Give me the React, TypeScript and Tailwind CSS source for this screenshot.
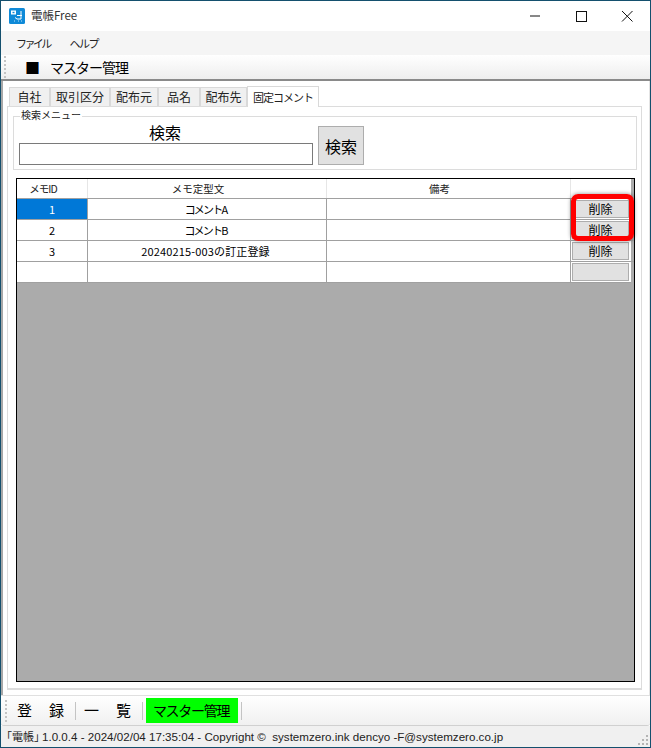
const jp = "font-['Noto_Sans_CJK_JP','Liberation_Sans',sans-serif]"

const tabs = [
  { label: "自社", width: "w-[41px]" },
  { label: "取引区分", width: "w-[60px]" },
  { label: "配布元", width: "w-[48px]" },
  { label: "品名", width: "w-[42px]" },
  { label: "配布先", width: "w-[47px]" },
]

const rows = [
  { id: "1", memo: "コメントA", selected: true, label: "削除", tight: true },
  { id: "2", memo: "コメントB", selected: false, label: "削除", tight: true },
  { id: "3", memo: "20240215-003の訂正登録", selected: false, label: "削除", tight: false },
  { id: "", memo: "", selected: false, label: "", tight: false },
]

function Grip() {
  return (
    <div className="flex w-[2px] flex-col gap-[2px] shrink-0">
      {[0, 1, 2, 3, 4, 5].map((i) => (
        <div key={i} className="h-[2px] w-[2px] bg-[#c4c4c4]" />
      ))}
    </div>
  )
}

function AppIcon() {
  return (
    <svg width="16" height="16" viewBox="0 0 16 16" className="shrink-0">
      <rect width="16" height="16" rx="1.5" fill="#0f8ad8" />
      <rect x="2" y="2.5" width="5" height="4" fill="#fff" />
      <rect x="3.5" y="3.8" width="2" height="1.4" fill="#0f8ad8" />
      <path d="M8 7.5h5M12 3v8H8M6 9.5l2 1.5" stroke="#fff" strokeWidth="1" fill="none" />
      <path d="M9 13h1M12 13h1M5 13h1" stroke="#bfe3fa" strokeWidth="1" />
    </svg>
  )
}

export default function App() {
  return (
    <div className={`${jp} relative flex h-[748px] w-[651px] flex-col overflow-hidden border border-[#14506e] bg-white text-black`}>
      {/* title bar */}
      <div className="flex h-[30px] shrink-0 items-center bg-white pl-[8px]">
        <AppIcon />
        <span className="ml-[6px] text-[11.5px] text-[#333]">電帳Free</span>
        <div className="ml-auto flex items-center">
          <svg width="46" height="30" viewBox="0 0 46 30">
            <path d="M18 15h10" stroke="#111" strokeWidth="1" />
          </svg>
          <svg width="46" height="30" viewBox="0 0 46 30">
            <rect x="18.5" y="10.5" width="10" height="10" stroke="#111" strokeWidth="1" fill="none" />
          </svg>
          <svg width="46" height="30" viewBox="0 0 46 30">
            <path d="M18 10l10.5 10.5M28.5 10L18 20.5" stroke="#111" strokeWidth="1" fill="none" />
          </svg>
        </div>
      </div>

      {/* menu */}
      <div className="flex h-[24px] shrink-0 items-center bg-[#f5f5f5] pl-[15px] text-[11px] tracking-[-2.6px] text-[#222]">
        <span>ファイル</span>
        <span className="ml-[20px] tracking-[-1.5px]">ヘルプ</span>
      </div>

      {/* top toolbar */}
      <div className="flex h-[26px] shrink-0 items-center border-b-2 border-[#8a8a8a] bg-gradient-to-b from-white to-[#eeeeee] pl-[3px]">
        <Grip />
        <span className="ml-[19px] text-[15px] leading-none">■</span>
        <span className="ml-[10px] text-[14px] tracking-[-1px]">マスター管理</span>
      </div>

      {/* content */}
      <div className="flex min-h-0 flex-1 flex-col border-l-2 border-r border-l-[#a8a8a8] border-r-[#e4e4e4] pl-[4px] pr-[7px] pb-[5px]">
        <div className="flex h-[25px] shrink-0 items-end pt-[4px] pl-[2px]">
          {tabs.map((tab) => (
            <div
              key={tab.label}
              className={`flex h-[19px] items-center justify-center border border-b-0 border-[#d9d9d9] bg-[#f0f0f0] text-[12px] text-[#222] ${tab.width}`}
            >
              {tab.label}
            </div>
          ))}
          <div className="relative z-10 mb-[-1px] flex h-[21px] w-[72px] items-center justify-center whitespace-nowrap border border-b-0 border-[#d9d9d9] bg-white text-[11px] tracking-[-1px] text-[#222]">
            固定コメント
          </div>
        </div>

        <div className="flex min-h-0 flex-1 flex-col border border-b-2 border-[#dcdcdc] pl-[5px] pr-[4px] pt-[9px] pb-[6px]">
          {/* search group */}
          <div className="relative flex h-[54px] shrink-0 items-end gap-[5px] border border-[#dcdcdc] pb-[4px] pl-[5px]">
            <span className="absolute left-[6px] top-[-9px] bg-white px-[1px] text-[10px] leading-[14px] text-[#222]">
              検索メニュー
            </span>
            <div className="flex w-[294px] flex-col items-center">
              <span className="pr-[2px] text-[16px] leading-[19px] mb-[1px]">検索</span>
              <div className="h-[22px] w-full border border-[#7a7a7a] bg-white" />
            </div>
            <div className="flex h-[39px] w-[46px] items-center justify-center border border-[#adadad] bg-[#e1e1e1] text-[16px]">
              検索
            </div>
          </div>

          {/* grid */}
          <div className="mt-[8px] ml-[3px] mr-[2px] flex min-h-0 flex-1 flex-col border border-black bg-[#ababab]">
            <div className="flex h-[19px] shrink-0 text-[10.5px] text-[#222]">
              <div className="flex w-[71px] items-center justify-center border-r border-[#e6e6e6] bg-white pr-[18px] tracking-[-1px]">メモID</div>
              <div className="flex w-[239px] items-center justify-center border-r border-[#e6e6e6] bg-white pr-[18px]">メモ定型文</div>
              <div className="flex w-[244px] items-center justify-center border-r border-[#e6e6e6] bg-white pr-[18px]">備考</div>
              <div className="w-[60px] bg-white" />
            </div>
            {rows.map((row, i) => (
              <div key={i} className="flex h-[21px] shrink-0 border-t border-[#a0a0a0] text-[11px]">
                <div
                  className={`flex w-[71px] items-center justify-center border-r border-[#a0a0a0] ${row.selected ? "bg-[#0078d7] text-white" : "bg-white"}`}
                >
                  {row.id}
                </div>
                <div
                  className={`flex w-[239px] items-center justify-center border-r border-[#a0a0a0] bg-white pr-[3px] ${row.tight ? "tracking-[-1.8px]" : "tracking-[0.15px]"}`}
                >
                  {row.memo}
                </div>
                <div className="w-[244px] border-r border-[#a0a0a0] bg-white" />
                <div className="flex w-[60px] items-center bg-white pl-[1px]">
                  <div className="flex h-[18px] w-[57px] items-center justify-center border border-[#adadad] bg-[#e1e1e1] text-[12px]">
                    {row.label}
                  </div>
                </div>
              </div>
            ))}
            <div className="h-[1px] w-[614px] shrink-0 bg-[#a0a0a0]" />
          </div>
        </div>
      </div>

      {/* bottom toolbar */}
      <div className="flex h-[31px] shrink-0 items-center gap-[3px] rounded-b-[3px] border-t border-b border-t-[#e0e0e0] border-b-[#d0d0d0] bg-gradient-to-b from-white to-[#f0f0f0] pl-[4px] text-[15px]">
        <Grip />
        <span className="ml-[7px] w-[55px] whitespace-pre tracking-[1px]">登　録</span>
        <div className="h-[18px] w-[1px] bg-[#c4c4c4]" />
        <span className="ml-[5px] w-[55px] whitespace-pre tracking-[1px]">一　覧</span>
        <div className="h-[18px] w-[1px] bg-[#c4c4c4]" />
        <span className="flex h-[25px] w-[92px] items-center justify-center bg-[#00ff00] pr-[2px] text-[14px] tracking-[-1.3px]">マスター管理</span>
        <div className="h-[18px] w-[1px] bg-[#c4c4c4]" />
      </div>

      {/* status bar */}
      <div className="relative flex h-[21px] shrink-0 items-center whitespace-pre bg-[#f0f0f0] font-['Liberation_Sans','Noto_Sans_CJK_JP',sans-serif] text-[11.6px] text-[#222]">
        <span className="mr-[-3px] font-['Noto_Sans_CJK_JP',sans-serif] text-[11px]">「電帳」</span>
        <span>1.0.0.4 - 2024/02/04 17:35:04 - Copyright ©  systemzero.ink dencyo -F@systemzero.co.jp</span>
        <svg width="12" height="12" viewBox="0 0 12 12" className="absolute right-[1px] bottom-[1px]" fill="#b4b4b4">
          <rect x="9" y="1" width="2" height="2" />
          <rect x="5" y="5" width="2" height="2" />
          <rect x="9" y="5" width="2" height="2" />
          <rect x="1" y="9" width="2" height="2" />
          <rect x="5" y="9" width="2" height="2" />
          <rect x="9" y="9" width="2" height="2" />
        </svg>
      </div>

      {/* red marker over the delete buttons */}
      <div className="absolute left-[570px] top-[193px] h-[47px] w-[63px] rounded-[7px] border-[5px] border-[#ff0000] shadow-[0_0_4px_rgba(0,0,0,0.45)]" />
    </div>
  )
}
